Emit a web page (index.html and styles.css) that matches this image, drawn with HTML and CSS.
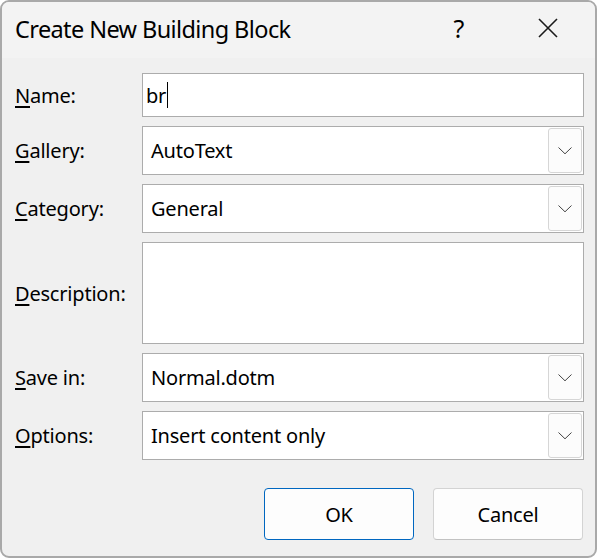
FILE: index.html
```html
<!DOCTYPE html>
<html lang="en">

<head>
    <meta charset="UTF-8">
    <meta name="viewport" content="width=device-width, initial-scale=1.0">
    <title>Create New Building Block</title>
    <link rel="stylesheet" href="styles.css">
</head>

<body>
    <div class="dialog">
        <div class="title-bar">
            <span class="title">Create New Building Block</span>
            <span class="caption-btn help">?</span>
            <span class="caption-btn close">
                <svg width="20" height="20" viewBox="0 0 20 20">
                    <path d="M1 1 L19 19 M19 1 L1 19" stroke="#1a1a1a" stroke-width="1.6" fill="none" />
                </svg>
            </span>
        </div>

        <form class="block-form">
            <label class="field-label"><u>N</u>ame:</label>
            <div class="text-box name-box">br<span class="caret"></span></div>

            <label class="field-label"><u>G</u>allery:</label>
            <div class="combo">
                <span class="combo-text">AutoText</span>
                <span class="drop-btn"><svg width="14" height="8" viewBox="0 0 14 8"><path d="M0.5 0.5 L7 6.8 L13.5 0.5" stroke="#444" stroke-width="1" fill="none" /></svg></span>
            </div>

            <label class="field-label"><u>C</u>ategory:</label>
            <div class="combo">
                <span class="combo-text">General</span>
                <span class="drop-btn"><svg width="14" height="8" viewBox="0 0 14 8"><path d="M0.5 0.5 L7 6.8 L13.5 0.5" stroke="#444" stroke-width="1" fill="none" /></svg></span>
            </div>

            <label class="field-label"><u>D</u>escription:</label>
            <div class="text-box desc-box"></div>

            <label class="field-label"><u>S</u>ave in:</label>
            <div class="combo">
                <span class="combo-text">Normal.dotm</span>
                <span class="drop-btn"><svg width="14" height="8" viewBox="0 0 14 8"><path d="M0.5 0.5 L7 6.8 L13.5 0.5" stroke="#444" stroke-width="1" fill="none" /></svg></span>
            </div>

            <label class="field-label"><u>O</u>ptions:</label>
            <div class="combo">
                <span class="combo-text">Insert content only</span>
                <span class="drop-btn"><svg width="14" height="8" viewBox="0 0 14 8"><path d="M0.5 0.5 L7 6.8 L13.5 0.5" stroke="#444" stroke-width="1" fill="none" /></svg></span>
            </div>
        </form>

        <div class="buttons">
            <button type="button" class="btn btn-default">OK</button>
            <button type="button" class="btn">Cancel</button>
        </div>
    </div>
</body>

</html>
```

FILE: styles.css
```css
* {
    box-sizing: border-box;
}

body {
    margin: 0;
    background-color: #fff;
    font-family: 'Noto Sans', sans-serif;
    color: #000;
}

.dialog {
    width: 597px;
    height: 558px;
    background-color: #f0f0f0;
    border: 2px solid #a9a9a9;
    border-radius: 9px;
    overflow: hidden;
}

.title-bar {
    height: 56px;
    background-color: #f3f3f3;
    display: flex;
    align-items: center;
    padding-left: 13px;
}

.title {
    flex: 1;
    font-size: 23.5px;
    letter-spacing: -0.6px;
    padding-bottom: 3px;
}

.caption-btn {
    display: flex;
    justify-content: center;
    align-items: center;
    height: 100%;
    padding-bottom: 4px;
}

.help {
    width: 84px;
    font-size: 25px;
}

.close {
    width: 94px;
}

.block-form {
    display: grid;
    grid-template-columns: 127px 442px;
    row-gap: 9px;
    padding: 15px 0 0 13px;
    font-size: 20px;
    letter-spacing: -0.2px;
}

.field-label {
    display: flex;
    align-items: center;
}

.field-label u {
    text-decoration-thickness: 2px;
    text-underline-offset: 3px;
}

.text-box,
.combo {
    background-color: #fff;
    border: 1px solid #acacac;
}

.name-box {
    height: 44px;
    display: flex;
    align-items: center;
    padding-left: 3px;
}

.caret {
    width: 1px;
    height: 26px;
    background-color: #000;
    margin-left: 1px;
}

.desc-box {
    height: 102px;
}

.combo {
    height: 49px;
    display: flex;
    align-items: center;
    padding: 1px;
}

.combo-text {
    flex: 1;
    padding-left: 7px;
}

.drop-btn {
    width: 34px;
    height: 100%;
    display: flex;
    align-items: center;
    justify-content: center;
    background-color: #fcfcfc;
    border: 1px solid #d6d6d6;
    border-radius: 3px;
}

.buttons {
    display: flex;
    justify-content: flex-end;
    gap: 19px;
    padding: 28px 12px 0 0;
}

.btn {
    width: 150px;
    height: 52px;
    font-family: inherit;
    font-size: 20px;
    letter-spacing: -0.2px;
    color: #000;
    background-color: #fdfdfd;
    border: 1px solid #d3d3d3;
    border-bottom-color: #c2c2c2;
    border-radius: 4px;
}

.btn-default {
    border-color: #0067c0;
}
```
